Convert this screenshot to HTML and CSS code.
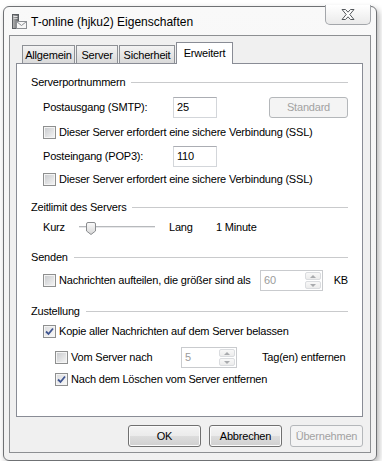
FILE: index.html
```html
<!DOCTYPE html>
<html lang="de">
  <head>
    <meta charset="UTF-8" />
    <title>T-online (hjku2) Eigenschaften</title>
    <link rel="stylesheet" href="styles.css">
  </head>

  <body>
    <div class="window">
      <div class="titlebar">
        <svg class="app-icon" width="16" height="16" viewBox="0 0 16 16">
          <defs>
            <linearGradient id="tower" x1="0" x2="1" y1="0" y2="0">
              <stop offset="0" stop-color="#b8b8b8" />
              <stop offset="1" stop-color="#5f6266" />
            </linearGradient>
          </defs>
          <rect x="1.5" y="0.5" width="6" height="14" fill="url(#tower)" stroke="#5a5d61" />
          <rect x="2.5" y="2" width="4" height="1" fill="#e4e4e4" />
          <rect x="2.5" y="4" width="4" height="1" fill="#d0d0d0" />
          <rect x="5.5" y="7.5" width="10" height="7" fill="#f6f6f6" stroke="#8b8e92" />
          <path d="M5.5 7.5 L10.5 11.5 L15.5 7.5" fill="none" stroke="#8b8e92" />
        </svg>
        <span class="title">T-online (hjku2) Eigenschaften</span>
        <div class="close-btn">
          <svg width="14" height="11" viewBox="0 0 14 11">
            <path d="M1 0.5 H4.5 L7 3.2 L9.5 0.5 H13 L8.8 5.5 L13 10.5 H9.5 L7 7.8 L4.5 10.5 H1 L5.2 5.5 Z"
              fill="#fff" stroke="#55585c" stroke-linejoin="round" />
          </svg>
        </div>
      </div>

      <div class="client">
        <div class="tabs">
          <div class="tab tab-allgemein">Allgemein</div>
          <div class="tab tab-server">Server</div>
          <div class="tab tab-sicherheit">Sicherheit</div>
          <div class="tab tab-erweitert active">Erweitert</div>
        </div>

        <div class="panel">
          <div class="group">
            <div class="ghead"><span>Serverportnummern</span><div class="rule"></div></div>
            <div class="row tall mt7">
              <span class="label port-label">Postausgang (SMTP):</span>
              <div class="textbox port">25</div>
              <div class="btn small disabled">Standard</div>
            </div>
            <div class="row mt7">
              <span class="cb"></span>
              <span>Dieser Server erfordert eine sichere Verbindung (SSL)</span>
            </div>
            <div class="row tall mt6">
              <span class="label port-label">Posteingang (POP3):</span>
              <div class="textbox port">110</div>
            </div>
            <div class="row mt5">
              <span class="cb"></span>
              <span>Dieser Server erfordert eine sichere Verbindung (SSL)</span>
            </div>
          </div>

          <div class="group mt13">
            <div class="ghead"><span>Zeitlimit des Servers</span><div class="rule"></div></div>
            <div class="row mt5">
              <span class="label kurz">Kurz</span>
              <div class="slider">
                <svg class="thumb" width="10" height="13" viewBox="0 0 10 13">
                  <defs>
                    <linearGradient id="thumbfill" x1="0" x2="0" y1="0" y2="1">
                      <stop offset="0" stop-color="#fbfbfb" />
                      <stop offset="1" stop-color="#d6d6d6" />
                    </linearGradient>
                  </defs>
                  <path d="M2 0.5 H8 Q9.5 0.5 9.5 2 V9 L5 12.5 L0.5 9 V2 Q0.5 0.5 2 0.5 Z"
                    fill="url(#thumbfill)" stroke="#8a8c8f" />
                </svg>
              </div>
              <span class="label lang">Lang</span>
              <span>1 Minute</span>
            </div>
          </div>

          <div class="group mt15">
            <div class="ghead"><span>Senden</span><div class="rule"></div></div>
            <div class="row tall mt5">
              <span class="cb"></span>
              <span class="label split-label">Nachrichten aufteilen, die größer sind als</span>
              <div class="spin spin-kb">
                <span class="spin-val">60</span>
                <div class="spin-btns">
                  <div class="spin-up"><i></i></div>
                  <div class="spin-down"><i></i></div>
                </div>
              </div>
              <span class="unit-kb">KB</span>
            </div>
          </div>

          <div class="group mt13">
            <div class="ghead"><span>Zustellung</span><div class="rule"></div></div>
            <div class="row mt5">
              <span class="cb checked">
                <svg width="9" height="9" viewBox="0 0 9 9"><path d="M1 4.5 L3.5 7 L8 1.5" fill="none" stroke="#3f5590" stroke-width="1.8" /></svg>
              </span>
              <span>Kopie aller Nachrichten auf dem Server belassen</span>
            </div>
            <div class="row tall indent mt8">
              <span class="cb"></span>
              <span class="label days-label">Vom Server nach</span>
              <div class="spin spin-days">
                <span class="spin-val">5</span>
                <div class="spin-btns">
                  <div class="spin-up"><i></i></div>
                  <div class="spin-down"><i></i></div>
                </div>
              </div>
              <span class="unit-days">Tag(en) entfernen</span>
            </div>
            <div class="row indent mt4">
              <span class="cb checked">
                <svg width="9" height="9" viewBox="0 0 9 9"><path d="M1 4.5 L3.5 7 L8 1.5" fill="none" stroke="#3f5590" stroke-width="1.8" /></svg>
              </span>
              <span>Nach dem Löschen vom Server entfernen</span>
            </div>
          </div>
        </div>

        <div class="actions">
          <div class="btn">OK</div>
          <div class="btn">Abbrechen</div>
          <div class="btn disabled">Übernehmen</div>
        </div>
      </div>
    </div>
  </body>
</html>
```
FILE: styles.css
```css
body {
  margin: 0;
  background-color: #ffffff;
  font-family: "Liberation Sans", Arial, sans-serif;
  font-size: 11px;
  letter-spacing: -0.2px;
  color: #000000;
}

.window {
  box-sizing: border-box;
  width: 374px;
  height: 455px;
  margin: 6px 0 0 3px;
  padding: 0 5px 7px;
  display: flex;
  flex-direction: column;
  border: 1px solid #6f7174;
  border-radius: 6px;
  background: linear-gradient(#f9f9f9, #f1f1f1);
  box-shadow: 2px 3px 6px rgba(0, 0, 0, 0.3);
}

.titlebar {
  height: 28px;
  display: flex;
  align-items: center;
  padding-left: 2px;
}

.app-icon {
  flex: none;
  margin-top: 2px;
}

.title {
  margin-left: 4px;
  margin-top: 2px;
  font-size: 12px;
  letter-spacing: 0;
  color: #000000;
}

.close-btn {
  box-sizing: border-box;
  width: 46px;
  height: 20px;
  margin-left: auto;
  align-self: flex-start;
  margin-top: -2px;
  display: flex;
  align-items: center;
  justify-content: center;
  border: 1px solid #a3a6aa;
  border-top: none;
  border-radius: 0 0 5px 5px;
  background: linear-gradient(#ffffff, #eaeaea);
}

.client {
  flex: 1;
  display: flex;
  flex-direction: column;
  border: 1px solid #8d8f92;
  background-color: #f0f0f0;
  padding: 6px 7px 0 6px;
}

.tabs {
  height: 21px;
  display: flex;
  align-items: flex-end;
  padding-left: 6px;
}

.tab {
  box-sizing: border-box;
  height: 18px;
  display: flex;
  align-items: center;
  justify-content: center;
  margin-right: 1px;
  border: 1px solid #8d9095;
  border-bottom: none;
  background: linear-gradient(#f3f3f3, #e6e6e6 50%, #dadada);
}

.tab-allgemein { width: 53px; }
.tab-server { width: 42px; }
.tab-sicherheit { width: 56px; }
.tab-erweitert { width: 57px; }

.tab.active {
  height: 22px;
  margin-bottom: -1px;
  padding-bottom: 1px;
  position: relative;
  z-index: 1;
  background: #ffffff;
  border-color: #898c95;
}

.panel {
  box-sizing: border-box;
  height: 354px;
  border: 1px solid #898c95;
  background-color: #ffffff;
  padding: 11px 14px 0 14px;
}

.group {
  display: flex;
  flex-direction: column;
}

.ghead {
  height: 15px;
  line-height: 15px;
  display: flex;
  align-items: center;
}

.rule {
  flex: 1;
  height: 1px;
  margin-left: 6px;
  background-color: #c9cacc;
}

.row {
  height: 15px;
  line-height: 15px;
  display: flex;
  align-items: center;
  padding-left: 12px;
  white-space: nowrap;
}

.row.tall {
  height: 21px;
}

.row.indent {
  padding-left: 24px;
}

.mt4 { margin-top: 4px; }
.mt5 { margin-top: 5px; }
.mt6 { margin-top: 6px; }
.mt7 { margin-top: 7px; }
.mt8 { margin-top: 8px; }
.mt13 { margin-top: 13px; }
.mt15 { margin-top: 15px; }

.label {
  flex: none;
}

.port-label { width: 130px; }
.kurz { width: 36px; }
.lang { width: 47px; margin-left: 14px; }
.split-label { width: 201px; }
.days-label { width: 110px; }

.textbox {
  box-sizing: border-box;
  height: 21px;
  padding-left: 3px;
  display: flex;
  align-items: center;
  border: 1px solid #d3d6da;
  border-top-color: #abadb3;
  background-color: #ffffff;
}

.port {
  width: 44px;
}

/* checkbox */
.cb {
  box-sizing: border-box;
  flex: none;
  width: 13px;
  height: 13px;
  margin-right: 3px;
  display: flex;
  align-items: center;
  justify-content: center;
  border: 1px solid #8e8f8f;
  background: linear-gradient(135deg, #c6c8cb, #f6f6f6);
  box-shadow: inset 0 0 0 1px #f4f4f4;
}

.cb.checked {
  background: linear-gradient(135deg, #dadbdd, #fafafa);
}

/* slider */
.slider {
  width: 76px;
  height: 15px;
  display: flex;
  align-items: center;
  background: linear-gradient(transparent 6px, #b7b9bc 6px, #b7b9bc 7px, #e7e8ea 7px, #e7e8ea 8px, transparent 8px);
}

.thumb {
  margin-left: 7px;
  margin-top: 1px;
}

/* spinner */
.spin {
  box-sizing: border-box;
  height: 21px;
  display: flex;
  border: 1px solid #c9cbce;
  background-color: #ffffff;
  color: #9b9b9b;
}

.spin-kb { width: 71px; }
.spin-days { width: 56px; }

.spin-val {
  flex: 1;
  padding-left: 3px;
  line-height: 19px;
}

.spin-btns {
  width: 16px;
  display: flex;
  flex-direction: column;
  gap: 1px;
  padding: 1px 1px 1px 0;
}

.spin-up,
.spin-down {
  flex: 1;
  display: flex;
  align-items: center;
  justify-content: center;
  border: 1px solid #dadcdf;
  border-radius: 2px;
  background: linear-gradient(#f8f8f8, #ececec);
}

.spin-up i,
.spin-down i {
  width: 0;
  height: 0;
  border-left: 3px solid transparent;
  border-right: 3px solid transparent;
}

.spin-up i {
  border-bottom: 3px solid #a9abae;
}

.spin-down i {
  border-top: 3px solid #a9abae;
}

.unit-kb { margin-left: 11px; }
.unit-days { margin-left: 25px; }

/* buttons */
.btn {
  box-sizing: border-box;
  width: 73px;
  height: 22px;
  display: flex;
  align-items: center;
  justify-content: center;
  border: 1px solid #707070;
  border-radius: 3px;
  background: linear-gradient(#f4f4f4, #ebebeb 50%, #dddddd 50%, #d0d0d0);
  box-shadow: inset 0 0 0 1px #fbfbfb;
}

.btn.disabled {
  border-color: #b4b7ba;
  background: #f4f4f4;
  box-shadow: none;
  color: #a2a2a2;
}

.btn.small {
  width: 79px;
  height: 21px;
  margin-left: auto;
}

.actions {
  display: flex;
  justify-content: flex-end;
  gap: 8px;
  margin-top: 8px;
}
```
